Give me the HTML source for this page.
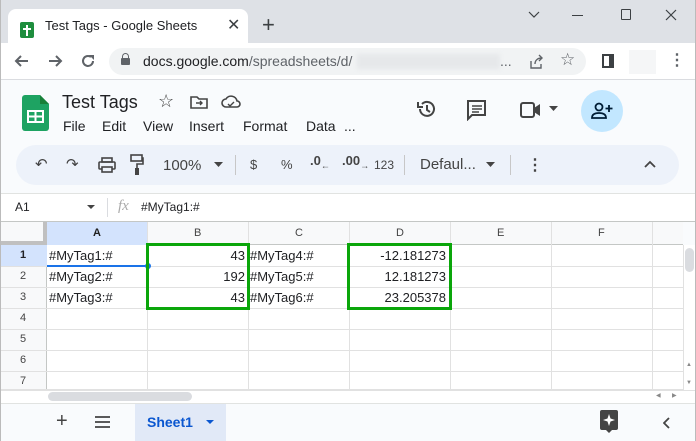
<!DOCTYPE html>
<html><head><meta charset="utf-8"><style>
*{box-sizing:border-box;margin:0;padding:0}
body{width:696px;height:441px;overflow:hidden;font-family:"Liberation Sans",sans-serif;background:#f9fbfd;position:relative;color:#202124}
.a{position:absolute}
.t{position:absolute;white-space:nowrap}
.ic{position:absolute}
</style></head><body>
<!-- title bar -->
<div class="a" style="left:0;top:0;width:696px;height:43px;background:#dee1e6"></div>
<div class="a" style="left:8px;top:9px;width:240px;height:34px;background:#fff;border-radius:8px 8px 0 0"></div>
<div class="a" style="left:20px;top:22px;width:14px;height:16px;background:#1e8e3e;border-radius:2px"></div>
<div class="a" style="left:26px;top:25px;width:2px;height:11px;background:#fff"></div>
<div class="a" style="left:23px;top:28px;width:8px;height:2px;background:#fff"></div>
<div class="t" style="left:45px;top:18px;font-size:13px;color:#202124">Test Tags - Google Sheets</div>
<div class="t" style="left:227px;top:15px;font-size:16px;color:#3c4043">✕</div>
<div class="t" style="left:262px;top:12px;font-size:22px;color:#3c4043">+</div>
<svg class="ic" style="left:527px;top:9px" width="14" height="12"><path d="M2 3l5 5 5-5" stroke="#3c4043" fill="none" stroke-width="1.2"/></svg>
<div class="a" style="left:572px;top:15px;width:11px;height:1px;background:#3c4043"></div>
<div class="a" style="left:621px;top:9px;width:10px;height:11px;border:1.3px solid #3c4043;border-radius:1px"></div>
<svg class="ic" style="left:664px;top:8px" width="14" height="14"><path d="M2 2l10 10M12 2L2 12" stroke="#3c4043" stroke-width="1.2"/></svg>
<!-- address bar -->
<div class="a" style="left:0;top:43px;width:696px;height:37px;background:#fff;border-bottom:1px solid #dadce0"></div>
<svg class="ic" style="left:13px;top:52px" width="18" height="18"><path d="M15 9H3M8 4L3 9l5 5" stroke="#5f6368" stroke-width="2" fill="none"/></svg>
<svg class="ic" style="left:46px;top:52px" width="18" height="18"><path d="M3 9h12M10 4l5 5-5 5" stroke="#5f6368" stroke-width="2" fill="none"/></svg>
<svg class="ic" style="left:79px;top:52px" width="18" height="18"><path d="M14 9a5 5 0 1 1-2-4" stroke="#5f6368" stroke-width="2" fill="none"/><path d="M10 3h5v5z" fill="#5f6368"/></svg>
<div class="a" style="left:109px;top:48px;width:477px;height:27px;background:#f1f3f4;border-radius:14px"></div>
<div class="a" style="left:121px;top:58px;width:9px;height:7px;background:#5f6368;border-radius:1px"></div>
<div class="a" style="left:122px;top:53px;width:7px;height:7px;border:1.5px solid #5f6368;border-radius:4px 4px 0 0"></div>
<div class="t" style="left:143px;top:53px;font-size:14px;color:#202124">docs.google.com<span style="color:#5f6368">/spreadsheets/d/</span></div>
<div class="a" style="left:357px;top:54px;width:143px;height:15px;background:#e6e8ea;filter:blur(2px)"></div>
<div class="t" style="left:500px;top:53px;font-size:14px;color:#5f6368">...</div>
<svg class="ic" style="left:528px;top:54px" width="16" height="16"><path d="M3 7v7h10v-4M7 10c0-4 3-6 7-6M11 1l3 3-3 3" stroke="#5f6368" stroke-width="1.4" fill="none"/></svg>
<div class="t" style="left:560px;top:50px;font-size:17px;color:#5f6368">☆</div>
<div class="a" style="left:602px;top:54px;width:12px;height:14px;border:2px solid #3c4043;border-right-width:5px"></div>
<div class="a" style="left:629px;top:50px;width:27px;height:24px;background:#f5f6f7"></div>
<div class="t" style="left:669px;top:50px;font-size:16px;color:#5f6368;font-weight:bold">⋮</div>
<!-- sheets header -->
<svg class="ic" style="left:22px;top:95px" width="27" height="36"><path d="M3 0h15l9 9v24a3 3 0 0 1-3 3H3a3 3 0 0 1-3-3V3a3 3 0 0 1 3-3z" fill="#1ea362"/><path d="M18 0l9 9h-9z" fill="#188038"/><rect x="6" y="16" width="15" height="11" fill="none" stroke="#fff" stroke-width="2"/><path d="M13.5 16v11M6 21.5h15" stroke="#fff" stroke-width="2"/></svg>
<div class="t" style="left:62px;top:92px;font-size:18px;color:#202124">Test Tags</div>
<div class="t" style="left:158px;top:91px;font-size:18px;color:#444">☆</div>
<svg class="ic" style="left:190px;top:94px" width="18" height="16"><path d="M1 3h6l2 2h8v9H1z" stroke="#444" stroke-width="1.6" fill="none"/><path d="M6 9h6M10 7l2 2-2 2" stroke="#444" stroke-width="1.4" fill="none"/></svg>
<svg class="ic" style="left:221px;top:94px" width="20" height="16"><path d="M5 13a4 4 0 0 1 0-8 6 6 0 0 1 11 2 3 3 0 0 1 0 6z" stroke="#444" stroke-width="1.6" fill="none"/><path d="M7 10l2 2 4-4" stroke="#444" stroke-width="1.4" fill="none"/></svg>
<div class="t" style="left:63px;top:118px;font-size:14px;color:#202124">File</div>
<div class="t" style="left:102px;top:118px;font-size:14px">Edit</div>
<div class="t" style="left:143px;top:118px;font-size:14px">View</div>
<div class="t" style="left:189px;top:118px;font-size:14px">Insert</div>
<div class="t" style="left:243px;top:118px;font-size:14px">Format</div>
<div class="t" style="left:306px;top:118px;font-size:14px">Data</div>
<div class="t" style="left:344px;top:118px;font-size:14px">...</div>
<svg class="ic" style="left:416px;top:98px" width="22" height="22"><path d="M4 11a7 7 0 1 0 2-5" stroke="#444" stroke-width="2" fill="none"/><path d="M2 4v5h5" stroke="#444" stroke-width="2" fill="none"/><path d="M11 7v5l3 2" stroke="#444" stroke-width="2" fill="none"/></svg>
<svg class="ic" style="left:466px;top:99px" width="22" height="22"><path d="M2 2h17v14H6l-4 4z" stroke="#444" stroke-width="2" fill="none"/><path d="M6 7h10M6 10h10M6 13h7" stroke="#444" stroke-width="1.6"/></svg>
<svg class="ic" style="left:520px;top:101px" width="22" height="18"><rect x="1" y="2" width="13" height="14" rx="2" stroke="#444" stroke-width="2" fill="none"/><path d="M14 7l6-4v12l-6-4z" fill="#444"/></svg>
<svg class="ic" style="left:549px;top:106px" width="10" height="6"><path d="M0 0h9l-4.5 5z" fill="#444"/></svg>
<div class="a" style="left:581px;top:90px;width:42px;height:42px;border-radius:50%;background:#c2e7ff"></div>
<svg class="ic" style="left:591px;top:101px" width="22" height="20"><circle cx="8" cy="6" r="3.5" stroke="#001d35" stroke-width="1.8" fill="none"/><path d="M1 17c0-4 3-5 7-5s7 1 7 5z" stroke="#001d35" stroke-width="1.8" fill="none"/><path d="M18 4v7M14.5 7.5h7" stroke="#001d35" stroke-width="1.8"/></svg>
<!-- toolbar -->
<div class="a" style="left:16px;top:145px;width:663px;height:40px;background:#edf2fa;border-radius:20px"></div>
<div class="t" style="left:35px;top:155px;font-size:15px;color:#444">↶</div>
<div class="t" style="left:66px;top:155px;font-size:15px;color:#444">↷</div>
<svg class="ic" style="left:98px;top:157px" width="18" height="16"><rect x="4" y="1" width="10" height="4" stroke="#444" stroke-width="1.6" fill="none"/><rect x="1" y="5" width="16" height="7" rx="1" stroke="#444" stroke-width="1.6" fill="none"/><rect x="4" y="10" width="10" height="5" stroke="#444" stroke-width="1.6" fill="#edf2fa"/></svg>
<svg class="ic" style="left:130px;top:154px" width="14" height="22"><rect x="1" y="1" width="11" height="6" stroke="#444" stroke-width="1.6" fill="none"/><path d="M12 4h1v6H7v4" stroke="#444" stroke-width="1.6" fill="none"/><rect x="5" y="14" width="4" height="7" fill="#444"/></svg>
<div class="t" style="left:163px;top:157px;font-size:15px;color:#444">100%</div>
<svg class="ic" style="left:214px;top:162px" width="10" height="6"><path d="M0 0h9l-4.5 5z" fill="#444"/></svg>
<div class="a" style="left:235px;top:155px;width:1px;height:20px;background:#c7c7c7"></div>
<div class="t" style="left:250px;top:157px;font-size:13px;color:#444">$</div>
<div class="t" style="left:281px;top:157px;font-size:13px;color:#444">%</div>
<div class="t" style="left:310px;top:153px;font-size:13px;color:#444;font-weight:bold">.0<sub style="font-size:9px">←</sub></div>
<div class="t" style="left:342px;top:153px;font-size:13px;color:#444;font-weight:bold">.00<sub style="font-size:9px">→</sub></div>
<div class="t" style="left:374px;top:158px;font-size:12px;color:#444">123</div>
<div class="a" style="left:404px;top:155px;width:1px;height:20px;background:#c7c7c7"></div>
<div class="t" style="left:420px;top:156px;font-size:15px;color:#444">Defaul...</div>
<svg class="ic" style="left:486px;top:162px" width="10" height="6"><path d="M0 0h9l-4.5 5z" fill="#444"/></svg>
<div class="a" style="left:510px;top:155px;width:1px;height:20px;background:#c7c7c7"></div>
<div class="t" style="left:527px;top:155px;font-size:16px;color:#444;font-weight:bold">⋮</div>
<svg class="ic" style="left:644px;top:160px" width="12" height="8"><path d="M1 7l5-5 5 5" stroke="#444" stroke-width="1.8" fill="none"/></svg>
<!-- formula bar -->
<div class="a" style="left:0;top:193px;width:696px;height:29px;background:#fff;border-top:1px solid #e1e3e1;border-bottom:1px solid #c4c7c5"></div>
<div class="t" style="left:15px;top:200px;font-size:12px">A1</div>
<svg class="ic" style="left:87px;top:205px" width="8" height="5"><path d="M0 0h8l-4 4z" fill="#444"/></svg>
<div class="a" style="left:107px;top:198px;width:1px;height:19px;background:#dadce0"></div>
<div class="t" style="left:118px;top:198px;font-size:15px;font-style:italic;color:#aaa;font-family:'Liberation Serif',serif">fx</div>
<div class="t" style="left:141px;top:200px;font-size:12px">#MyTag1:#</div>
<!-- grid -->
<div class="a" style="left:0;top:222px;width:683px;height:168px;background:#fff"></div>
<div class="a" style="left:0;top:222px;width:47px;height:23px;background:#f8f9fa;border-right:4px solid #c0c0c0;border-bottom:4px solid #c0c0c0"></div>
<div class="a" style="left:47px;top:222px;width:636px;height:23px;background:#f8f9fa;border-bottom:1px solid #c4c7c5"></div>
<div class="a" style="left:47px;top:222px;width:100px;height:23px;background:#d3e3fd"></div>
<div class="a" style="left:0;top:245px;width:47px;height:145px;background:#f8f9fa;border-right:1px solid #c4c7c5"></div>
<div class="a" style="left:0;top:245px;width:47px;height:21px;background:#d3e3fd"></div>
<svg class="a" style="left:0;top:222px" width="683" height="168">
<g stroke="#e1e1e1" stroke-width="1">
<path d="M147.5 0V168M248.5 0V168M349.5 0V168M450.5 0V168M551.5 0V168M652.5 0V168"/>
<path d="M0 44.5H683M0 65.5H683M0 86.5H683M0 107.5H683M0 128.5H683M0 149.5H683M0 167.5H683"/>
</g></svg>
<div class="t" style="left:93px;top:227px;font-size:11px;color:#1f1f1f;font-weight:bold">A</div>
<div class="t" style="left:194px;top:227px;font-size:11px;color:#444">B</div>
<div class="t" style="left:295px;top:227px;font-size:11px;color:#444">C</div>
<div class="t" style="left:396px;top:227px;font-size:11px;color:#444">D</div>
<div class="t" style="left:497px;top:227px;font-size:11px;color:#444">E</div>
<div class="t" style="left:598px;top:227px;font-size:11px;color:#444">F</div>
<div class="t" style="left:20px;top:249px;font-size:11px;font-weight:bold">1</div>
<div class="t" style="left:20px;top:270px;font-size:11px;color:#444">2</div>
<div class="t" style="left:20px;top:291px;font-size:11px;color:#444">3</div>
<div class="t" style="left:20px;top:312px;font-size:11px;color:#444">4</div>
<div class="t" style="left:20px;top:333px;font-size:11px;color:#444">5</div>
<div class="t" style="left:20px;top:354px;font-size:11px;color:#444">6</div>
<div class="t" style="left:20px;top:375px;font-size:11px;color:#444">7</div>
<div class="a" style="left:47px;top:245px;width:101px;height:22px;border:2px solid #1a73e8;border-top:0;border-left:0;border-right:0"></div>
<div class="a" style="left:145px;top:263px;width:6px;height:6px;background:#1a73e8;border-radius:50%"></div>
<div class="t" style="left:49px;top:248px;font-size:13px">#MyTag1:#</div>
<div class="t" style="left:49px;top:269px;font-size:13px">#MyTag2:#</div>
<div class="t" style="left:49px;top:290px;font-size:13px">#MyTag3:#</div>
<div class="t" style="left:250px;top:248px;font-size:13px">#MyTag4:#</div>
<div class="t" style="left:250px;top:269px;font-size:13px">#MyTag5:#</div>
<div class="t" style="left:250px;top:290px;font-size:13px">#MyTag6:#</div>
<div class="t" style="left:150px;top:248px;width:95px;text-align:right;font-size:13px">43</div>
<div class="t" style="left:150px;top:269px;width:95px;text-align:right;font-size:13px">192</div>
<div class="t" style="left:150px;top:290px;width:95px;text-align:right;font-size:13px">43</div>
<div class="t" style="left:350px;top:248px;width:96px;text-align:right;font-size:13px">-12.181273</div>
<div class="t" style="left:350px;top:269px;width:96px;text-align:right;font-size:13px">12.181273</div>
<div class="t" style="left:350px;top:290px;width:96px;text-align:right;font-size:13px">23.205378</div>
<div class="a" style="left:146px;top:243px;width:104px;height:67px;border:3px solid #0aa60a"></div>
<div class="a" style="left:347px;top:243px;width:105px;height:67px;border:3px solid #0aa60a"></div>
<!-- vertical scrollbar -->
<div class="a" style="left:683px;top:245px;width:13px;height:145px;background:#fff;border-left:1px solid #e1e1e1"></div>
<div class="a" style="left:685px;top:248px;width:9px;height:24px;background:#dadce0;border-radius:5px"></div>
<div class="t" style="left:686px;top:362px;font-size:6px;color:#888">▲</div>
<div class="t" style="left:686px;top:380px;font-size:6px;color:#888">▼</div>
<!-- horizontal scrollbar -->
<div class="a" style="left:0;top:390px;width:696px;height:13px;background:#fff;border-top:1px solid #e1e1e1"></div>
<div class="a" style="left:48px;top:392px;width:144px;height:9px;background:#dadce0;border-radius:5px"></div>
<div class="t" style="left:656px;top:392px;font-size:6px;color:#888">◀</div>
<div class="t" style="left:672px;top:392px;font-size:6px;color:#888">▶</div>
<!-- bottom bar -->
<div class="a" style="left:0;top:403px;width:696px;height:38px;background:#f9fbfd;border-top:1px solid #e1e3e1"></div>
<div class="t" style="left:56px;top:410px;font-size:20px;color:#444">+</div>
<svg class="ic" style="left:95px;top:416px" width="16" height="12"><path d="M0 1h15M0 6h15M0 11h15" stroke="#444" stroke-width="1.8"/></svg>
<div class="a" style="left:135px;top:404px;width:91px;height:37px;background:#e1e9f7"></div>
<div class="t" style="left:147px;top:414px;font-size:14px;font-weight:bold;color:#0b57d0">Sheet1</div>
<svg class="ic" style="left:206px;top:420px" width="9" height="5"><path d="M0 0h8l-4 4z" fill="#0b57d0"/></svg>
<svg class="ic" style="left:600px;top:410px" width="18" height="24"><path d="M2 0h14a2 2 0 0 1 2 2v16a2 2 0 0 1-2 2h-4l-3 3-3-3H2a2 2 0 0 1-2-2V2a2 2 0 0 1 2-2z" fill="#444"/><path d="M9 4l1.5 4.5L15 10l-4.5 1.5L9 16l-1.5-4.5L3 10l4.5-1.5z" fill="#fff"/></svg>
<svg class="ic" style="left:663px;top:417px" width="8" height="12"><path d="M6 1L1 6l5 5" stroke="#444" stroke-width="1.8" fill="none"/></svg>
<div class="a" style="left:0;top:0;width:1px;height:441px;background:#bbb"></div>
<div class="a" style="left:695px;top:0;width:1px;height:441px;background:#bbb"></div>
</body></html>
